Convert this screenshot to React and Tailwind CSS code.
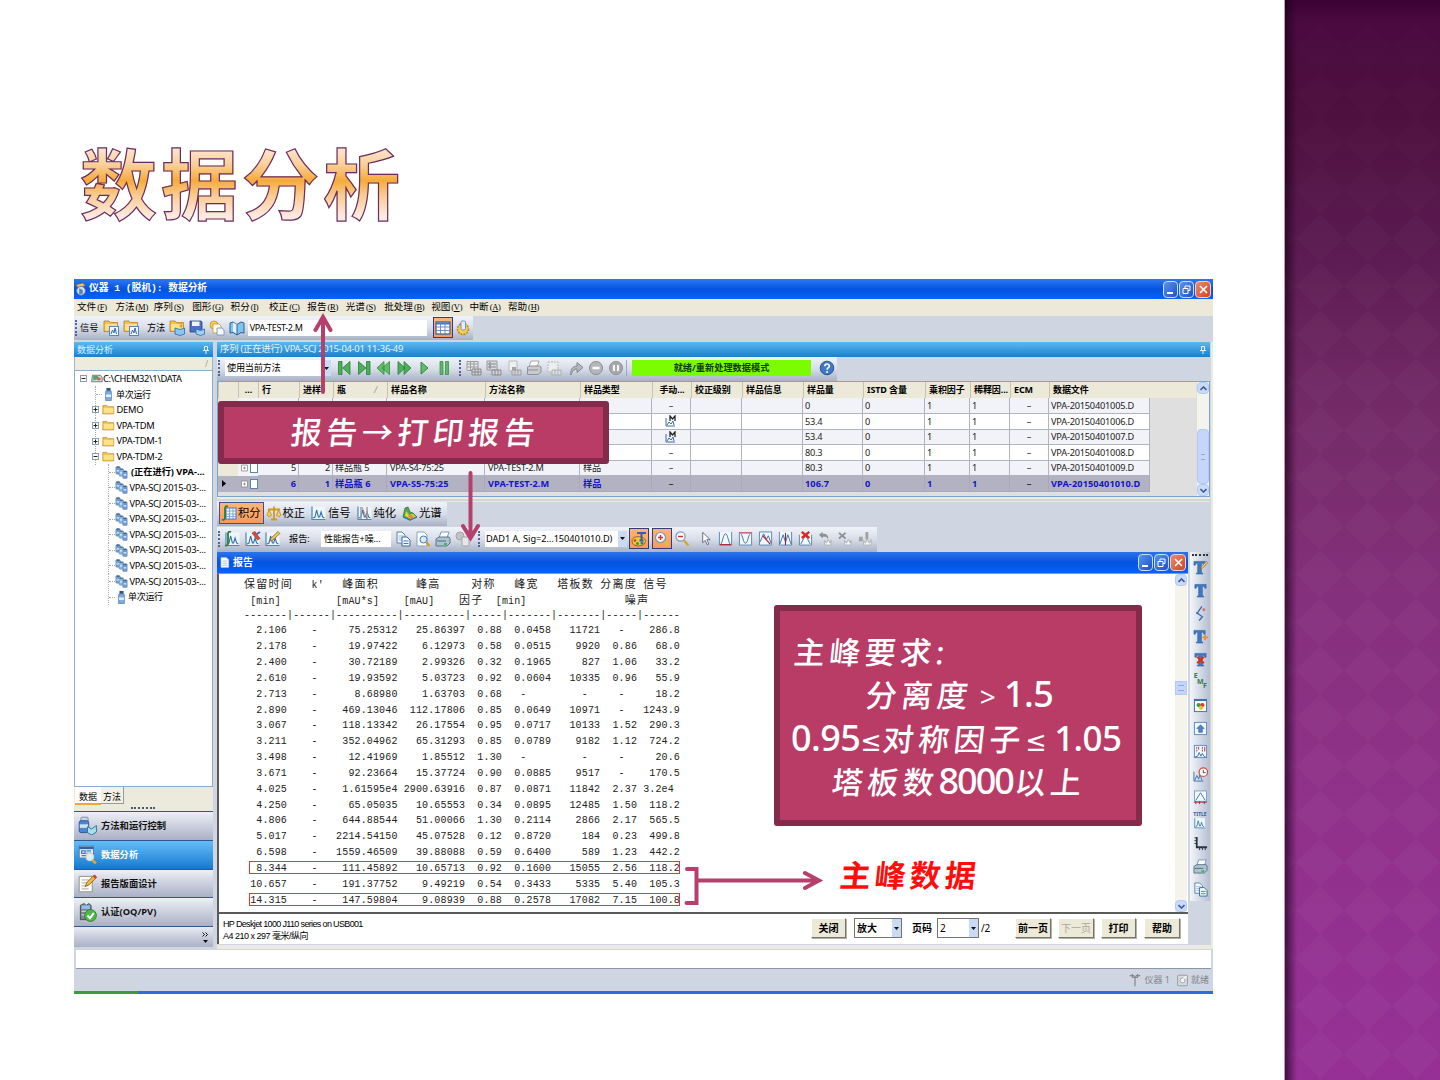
import React from 'react';

/* ---------- icons ---------- */

const Svg = ({ s = 16, children, className = '' }) => (
  <svg width={s} height={s} viewBox="0 0 16 16" fill="none" className={'shrink-0 ' + className}>
    {children}
  </svg>
);

const Chart = ({ x = 1, c = '#4e86b4', line = '#35719f' }) => (
  <>
    <rect x={x} y="1.5" width="13.5" height="13" fill="#eef6fc" />
    <path d={`M${x} 1.5v13h13.5`} stroke={c} strokeWidth="1.2" />
    <path d={`M${x + 1} 13l2-1 1.600-7 1.800 7 1.200 0 1.500-5 1.500 5 1.800 1`} stroke={line} strokeWidth="1.1" />
  </>
);

const Folder = ({ y = 0 }) => (
  <>
    <path d={`M1 ${3 + y}h5l1.500 1.500h7v9h-13.500z`} fill="#f2c14b" stroke="#a87a1c" strokeWidth=".7" />
    <path d={`M2 ${6 + y}h12v6.500h-12z`} fill="#fbe08a" />
  </>
);

const shapes = {
  app: (
    <>
      <path d="M2 3l8-2 3 3-8 3z" fill="#e8c070" stroke="#6b5a30" strokeWidth=".7" />
      <circle cx="8" cy="10" r="5" fill="#cfe0f2" stroke="#5a7ba6" />
      <path d="M6 7l4 2v4l-4 1z" fill="#5b7fae" />
    </>
  ),
  folderChart: (
    <>
      <Folder y={-2} />
      <rect x="6.500" y="6.500" width="9" height="9" fill="#f3f8ff" stroke="#5a86c0" />
      <path d="M8 14l1.500-4 1.500 3 1-5 1.500 6" stroke="#3369b0" />
    </>
  ),
  folderBook: (
    <>
      <Folder y={-2} />
      <path d="M8 4c3-4 6-1 5 2l2-1-3 3-2-3 1.500.5c.5-2-1.500-2.500-3.500-1.500z" fill="#e59b2c" />
      <path d="M6 8l5 1.500 4.500-1.500v6l-4.500 1.500-5-1.500z" fill="#8cc7ee" stroke="#2a6aa6" strokeWidth=".8" />
    </>
  ),
  save: (
    <>
      <path d="M1 1h11l1 1v10h-12z" fill="#4f6fc0" stroke="#283f86" strokeWidth=".8" />
      <rect x="3" y="1.500" width="7.500" height="4.500" fill="#eef2fa" />
      <path d="M7 9l4.500 1.500 4-1.500v5l-4 1.500-4.500-1.500z" fill="#9fd2f0" stroke="#2a6aa6" strokeWidth=".8" />
    </>
  ),
  pages: (
    <>
      <circle cx="5" cy="5" r="4" fill="#f6d154" stroke="#b98618" strokeWidth=".7" />
      <path d="M4 4h6l2 2v7h-8z" fill="#fffbe5" stroke="#b99a48" strokeWidth=".8" />
      <path d="M8 8h5l2 2v5h-7z" fill="#f6f9ff" stroke="#6f8db9" strokeWidth=".8" />
    </>
  ),
  book: (
    <>
      <path d="M1 3l3-1 4 2.500 4-2.500 3 1v10l-3-.5-4 2.500-4-2.500-3 .5z" fill="#85c3ea" stroke="#27619a" />
      <path d="M4 2.500v9l4 2.500v-9.500z" fill="#e3f4fd" />
      <path d="M8 4.500v10" stroke="#27619a" />
    </>
  ),
  grid: (
    <>
      <rect x="1" y="2" width="14" height="12" fill="#fff" stroke="#2c5da6" strokeWidth="1.200" />
      <path d="M1 3.500h14" stroke="#3d78c8" strokeWidth="2" />
      <path d="M1 7h14M1 10.500h14M5.500 3v11M10 3v11" stroke="#5d86bd" strokeWidth=".9" />
    </>
  ),
  sheetGear: (
    <>
      <circle cx="8" cy="9" r="5.500" fill="#f4cf55" stroke="#b58a1c" strokeDasharray="2 1" strokeWidth="1.500" />
      <rect x="6" y="1" width="4.500" height="9" rx="1.500" fill="#e8eef8" stroke="#7a8eb3" />
    </>
  ),
  drive: (
    <>
      <path d="M3 4h10l2 3v5h-13z" fill="#d4dce4" stroke="#56636e" />
      <path d="M4 5h6v4l-6 1z" fill="#4aa768" />
      <path d="M9 6l4 1v3h-4z" fill="#d95f50" />
    </>
  ),
  vial: (
    <>
      <rect x="5.500" y="0" width="5" height="3.500" fill="#35506e" />
      <path d="M5 3.500h6l.5 1v11h-7v-11z" fill="#79aee6" stroke="#44699b" strokeWidth=".8" />
      <rect x="5" y="8" width="6" height="3" fill="#e8f1fb" />
    </>
  ),
  folder: <Folder />,
  vials: (
    <>
      <rect x="1" y="1" width="5.500" height="9" rx="1" fill="#6f9fd3" stroke="#5c82ad" strokeWidth=".6" />
      <rect x="5" y="3.500" width="5.500" height="9" rx="1" fill="#8bb7e2" stroke="#5c82ad" strokeWidth=".6" />
      <rect x="9.500" y="6" width="5.500" height="9.500" rx="1" fill="#6e9bd0" stroke="#5c82ad" strokeWidth=".6" />
      <path d="M2 1.500h3.500M6 4h3.500M10.500 6.500h3.500" stroke="#3d5f86" strokeWidth="1.500" />
      <path d="M2 6h3M6 8.500h3M10.500 11h3.500" stroke="#e8f2fb" strokeWidth="1.500" />
    </>
  ),
  first: <path d="M2.500 1.500h3.500v13h-3.500zM14 1.500v13l-7.500-6.500z" fill="#4fae58" stroke="#24803a" strokeWidth=".8" />,
  last: <path d="M10.500 1.500h3.500v13h-3.500zM2.500 1.500v13l7.500-6.500z" fill="#4fae58" stroke="#24803a" strokeWidth=".8" />,
  prev: <path d="M13.500 1.500v13l-7.500-6.500zM8 1.500v13l-7-6.500z" fill="#63bd66" stroke="#2d8a42" strokeWidth=".8" />,
  next: <path d="M2 1.500v13l7-6.500zM8 1.500v13l7-6.500z" fill="#4fae58" stroke="#24803a" strokeWidth=".8" />,
  play: <path d="M5 2v12l7-6z" fill="#63bd66" stroke="#24803a" strokeWidth=".9" />,
  pause: <path d="M4 1.500h3v13h-3zM9.500 1.500h3v13h-3z" fill="#5fb864" stroke="#2d8a42" strokeWidth=".7" />,
  gGrid: (
    <>
      <path d="M1 1.500h11v9h-11zM1 4h11M1 7h11M4.500 1.500v9M8 1.500v9" stroke="#9b9ca0" fill="#e9e9ea" />
      <path d="M6 9h9v6h-9zM6 12h9M9 9v6M12 9v6" stroke="#85878c" fill="#d4d5d8" />
    </>
  ),
  gList: (
    <>
      <path d="M1 1h10v9h-10z" fill="#d9dadd" stroke="#94969b" />
      <path d="M3 3h2v2h-2zM3 6h2v2h-2zM6 4h4M6 7h4" stroke="#85878c" />
      <path d="M6 10h9v5h-9zM9 10v5M12 10v5" stroke="#85878c" fill="#d4d5d8" />
    </>
  ),
  gPage: (
    <>
      <path d="M3 1h8v10h-8z" fill="#f0f0f1" stroke="#b9babd" />
      <path d="M6 7h4v4h-4z" fill="#a1a3a8" />
      <path d="M6 10h9v5h-9zM9 10v5M12 10v5" stroke="#9b9ca0" fill="#d4d5d8" />
    </>
  ),
  gPrint: (
    <>
      <path d="M5 1h8l-2 6h-8z" fill="#fafafa" stroke="#a6a8ac" />
      <path d="M1.500 7l2-1h10l1.500 1v5l-3 2.500h-10.500z" fill="#c9cacd" stroke="#8f9196" />
      <path d="M2 10h10" stroke="#8f9196" />
    </>
  ),
  gDots: (
    <>
      <path d="M2 2h10v10h-10z" stroke="#b3b5b9" strokeDasharray="2 1" fill="#eceded" />
      <path d="M6 10h9v5h-9zM9 10v5M12 10v5" stroke="#a9abb0" fill="#e2e3e5" />
    </>
  ),
  redo: <path d="M3 15c-1-6 2-9 6-9v-3.500l6 5-6 5v-3.500c-3 0-5 2-6 6z" fill="#b4b6ba" stroke="#7d8085" strokeWidth=".9" />,
  stop: (
    <>
      <circle cx="8" cy="8" r="6.500" fill="#b4b6ba" stroke="#8b8d92" />
      <path d="M4.500 8h7" stroke="#fff" strokeWidth="2.500" />
    </>
  ),
  hold: (
    <>
      <circle cx="8" cy="8" r="6.500" fill="#a7a9ad" stroke="#8b8d92" />
      <path d="M6 5v6M10 5v6" stroke="#fff" strokeWidth="1.800" />
    </>
  ),
  help: (
    <>
      <circle cx="8" cy="8" r="6.800" fill="#3f78c4" stroke="#2b548f" />
      <path d="M5.800 6.300c0-3 4.600-3 4.600-.2 0 1.600-2.300 1.700-2.300 3.600" stroke="#fff" strokeWidth="1.600" />
      <circle cx="8.100" cy="12" r="1" fill="#fff" />
    </>
  ),
  integral: (
    <>
      <rect x="5" y="3" width="10" height="11" fill="#f4f9ff" stroke="#4b76ae" />
      <path d="M5 6h10M5 9h10M5 11.500h10M8.500 3v11M12 3v11" stroke="#6f98c9" strokeWidth=".8" />
      <path d="M7 1.500c-2-1-3 0-3 2v9c0 2-1 3-3 2" stroke="#2f7d35" strokeWidth="1.800" />
    </>
  ),
  scale: (
    <>
      <path d="M8 1.500v12M2 4.500h12M5 14.500h6" stroke="#d19a1f" strokeWidth="1.800" />
      <path d="M1 10l2-5 2.500 5c-1 2-3.500 2-4.500 0zM10.500 10l2-5 2.500 5c-1 2-3.500 2-4.500 0z" fill="#f5cf5f" stroke="#bd8516" strokeWidth=".8" />
    </>
  ),
  signal: <Chart />,
  purity: (
    <>
      <Chart />
      <path d="M4 2v12M10 2v12" stroke="#9a9fa8" strokeWidth="1.500" />
      <path d="M5 2l5 12" stroke="#cd5a60" strokeWidth=".7" />
    </>
  ),
  spectrum: (
    <>
      <path d="M1 12l2-9 3-1 2 5 3 1 4 4-7 3z" fill="#4daa4b" stroke="#266e36" strokeWidth=".7" />
      <path d="M3 11l1-5 3 4 4-1 3 3-5 2z" fill="#e9d33d" />
      <path d="M6 11l2-2 4 3-3 2z" fill="#df8a33" />
      <path d="M1 12l7 3 7-3" stroke="#3d73b5" strokeWidth="1.200" />
    </>
  ),
  intChart: (
    <>
      <Chart />
      <path d="M6 1c-2-.8-3 0-3 2v9c0 2-1 3-3 2.500" stroke="#2f7d35" strokeWidth="1.800" />
    </>
  ),
  chartTool: (
    <>
      <Chart />
      <path d="M7 2l3-1.500 5 7-2.500 1.500z" fill="#d84b3e" stroke="#8d2c25" strokeWidth=".6" />
      <path d="M12 3l3-2" stroke="#3d6b9d" strokeWidth="1.800" />
    </>
  ),
  chartPen: (
    <>
      <Chart />
      <path d="M5 10l1-3 7-6.500 2 2-7 6.500z" fill="#eac25b" stroke="#7d642a" strokeWidth=".7" />
    </>
  ),
  copy: (
    <>
      <path d="M2 1h5l3 3v8h-8z" fill="#f8fbff" stroke="#5b7fac" />
      <path d="M3.500 5h5M3.500 7h5M3.500 9h5" stroke="#86a5cb" strokeWidth=".8" />
      <path d="M7 6h5l3 3v6h-8z" fill="#f8fbff" stroke="#3a6aa3" />
      <path d="M8.500 10h5M8.500 12.500h5" stroke="#3f78c4" strokeWidth="1" />
    </>
  ),
  preview: (
    <>
      <path d="M2 1h7l3 3v11h-10z" fill="#fff" stroke="#8ca3bf" />
      <circle cx="8.500" cy="8.500" r="3.500" fill="#d5ecfa" stroke="#4b7ba8" />
      <path d="M11 11l3.500 4" stroke="#cf9c2d" strokeWidth="2.200" />
    </>
  ),
  print: (
    <>
      <path d="M6 1h8l-2 6h-8z" fill="#fff" stroke="#6f8fa9" strokeWidth=".9" />
      <path d="M1 8l3-2h10l1 1.500v4.500l-3 3h-11z" fill="#aec3cf" stroke="#4f6d7e" strokeWidth=".9" />
      <path d="M2 10h9" stroke="#4f6d7e" />
      <path d="M9 12h3v2h-3z" fill="#37c04a" />
    </>
  ),
  gCopy: (
    <>
      <circle cx="5" cy="5" r="4" fill="#c2c3c6" stroke="#a3a5a8" />
      <path d="M7 6h7v9h-7z" fill="#e6e6e8" stroke="#a3a5a8" />
    </>
  ),
  palette: (
    <>
      <path d="M1 10c0-4 5-5 9-4s6 4 3 7-12 3-12-3z" fill="#f0c63e" stroke="#94681a" />
      <circle cx="4" cy="9.500" r="1.300" fill="#c33" />
      <circle cx="6.500" cy="12.500" r="1.500" fill="#2f9a43" />
      <circle cx="11" cy="12" r="1.500" fill="#2f6fc4" />
      <path d="M6 2h9M10.500 2v8M8.500 9.500h4" stroke="#2f62ae" strokeWidth="2" />
    </>
  ),
  zoomIn: (
    <>
      <circle cx="6.500" cy="6.500" r="5" fill="#f6fbff" stroke="#8097b0" strokeWidth="1.200" />
      <path d="M4 6.500h5M6.500 4v5" stroke="#c5352c" strokeWidth="1.400" />
      <path d="M10.500 10.500l4 4.500" stroke="#e5bc3e" strokeWidth="2.600" />
    </>
  ),
  zoomOut: (
    <>
      <circle cx="6.500" cy="5.500" r="4.600" fill="#f6fbff" stroke="#8097b0" strokeWidth="1.200" />
      <path d="M4 5.500h5" stroke="#c5352c" strokeWidth="1.400" />
      <path d="M10 9.500l4.500 5" stroke="#d5a82e" strokeWidth="2.400" />
    </>
  ),
  cursor: <path d="M5 1.500v11l2.700-2.500 2 4.500 1.800-.8-2-4.500h3.500z" fill="#fff" stroke="#4f5c73" strokeWidth=".9" />,
  peakUp: (
    <>
      <path d="M1.500 1v14h13v-14" fill="#f3f8fd" stroke="#5585bb" />
      <path d="M3 14c2-2 2.500-11 5-11s3 9 5 11" stroke="#3a6da5" />
      <path d="M2 14.500h12" stroke="#b22a34" strokeWidth="1.200" />
    </>
  ),
  peakDown: (
    <>
      <path d="M1.500 1v14h13v-14" fill="#f3f8fd" stroke="#5585bb" />
      <path d="M3 3c2 1 2.500 10 5 10s3-9 5-10" stroke="#3a6da5" />
      <path d="M2 2h12" stroke="#b22a34" strokeWidth="1.200" />
    </>
  ),
  peakTan: (
    <>
      <path d="M1.500 1v14h13v-14z" fill="#f3f8fd" stroke="#5585bb" />
      <path d="M2 12l4-9 3 6 2-4 3 8" stroke="#3a6da5" />
      <path d="M5 5l8 9" stroke="#b22a34" strokeWidth="1.400" />
    </>
  ),
  peakSplit: (
    <>
      <path d="M1.500 1v14h13v-14" fill="#f3f8fd" stroke="#5585bb" />
      <path d="M2 14l3.500-10 2.500 8 2.500-8 3.500 10" stroke="#3a6da5" />
      <path d="M8 2v13" stroke="#812c3c" strokeWidth="1.200" />
    </>
  ),
  peakDel: (
    <>
      <path d="M1.500 4v11h13v-11" fill="#f3f8fd" stroke="#5585bb" />
      <path d="M3 14l3-6 2-2 2 2 3 6" stroke="#3a6da5" />
      <path d="M4 1l8 6.500M12 1l-8 6.500" stroke="#d8291c" strokeWidth="2.500" />
    </>
  ),
  gUndo: (
    <>
      <path d="M1 4l4-3v2c5 0 6 2 6 6-1-3-3-3-6-3v2z" fill="#8d9094" />
      <path d="M7 15v-5l2 3 2-4 2 4 1-3v5z" fill="#f6f6f6" stroke="#b0b2b6" />
    </>
  ),
  gDel: (
    <>
      <path d="M1 2l7 6M8 2l-7 6" stroke="#8d9094" strokeWidth="2" />
      <path d="M7 15v-5l2 3 2-4 2 4 1-3v5z" fill="#f6f6f6" stroke="#b0b2b6" />
    </>
  ),
  gInfo: (
    <>
      <path d="M1 6h4v5h-4zM8 1h3v8h-3z" fill="#a0a2a6" />
      <path d="M6 15v-5l2 3 2-4 2 4 2-4v6z" fill="#f6f6f6" stroke="#b0b2b6" />
    </>
  ),
  doc: (
    <>
      <path d="M3 1h8l3 3v11h-11z" fill="#fff" stroke="#c4d8f5" />
      <path d="M5 6h7M5 9h7M5 12h7" stroke="#8fa8cc" />
    </>
  ),
  text: <path d="M2 1.500h12v4h-1.500c-.3-1.700-.8-2-2.500-2v9.500c0 .8.500 1 1.500 1v1h-7v-1c1 0 1.500-.2 1.500-1v-9.500c-1.700 0-2.200.3-2.500 2h-1.500z" fill="#3f79c4" stroke="#234d8c" strokeWidth=".5" />,
  textPen: (
    <>
      <path d="M1 1.500h12v4h-1.500c-.3-1.700-.8-2-2.500-2v9.500c0 .8.500 1 1.500 1v1h-7v-1c1 0 1.500-.2 1.500-1v-9.500c-1.700 0-2.200.3-2.500 2h-1.500z" fill="#3f79c4" stroke="#234d8c" strokeWidth=".5" />
      <path d="M8 10l1-3 5-5.500 1.500 1.500-5 5.500z" fill="#f0d070" stroke="#7d642a" strokeWidth=".7" />
    </>
  ),
  textPlus: (
    <>
      <path d="M1 1.500h12v4h-1.500c-.3-1.700-.8-2-2.500-2v9.500c0 .8.500 1 1.500 1v1h-7v-1c1 0 1.500-.2 1.500-1v-9.500c-1.700 0-2.200.3-2.500 2h-1.500z" fill="#3f79c4" stroke="#234d8c" strokeWidth=".5" />
      <path d="M13 6v6M10 9h6" stroke="#ea8b3a" strokeWidth="1.800" />
    </>
  ),
  textDel: (
    <>
      <path d="M2 1.500h12v4h-1.500c-.3-1.700-.8-2-2.500-2v9.500c0 .8.500 1 1.500 1v1h-7v-1c1 0 1.500-.2 1.500-1v-9.500c-1.700 0-2.200.3-2.500 2h-1.500z" fill="#3f79c4" stroke="#234d8c" strokeWidth=".5" />
      <path d="M4.500 5l7 7M11.500 5l-7 7" stroke="#d8321c" strokeWidth="2.400" />
    </>
  ),
  poly: (
    <>
      <path d="M9.500 .5l-5 7 5.500 4-3.500 4" stroke="#3e6ea8" strokeWidth="1.400" />
      <circle cx="11.500" cy="4" r="1.500" fill="#d9705c" />
      <circle cx="4.500" cy="7.500" r="1.200" fill="#3e6ea8" />
    </>
  ),
  picture: (
    <>
      <rect x="1.500" y="1.500" width="13" height="13" fill="#fff" stroke="#3b6ea9" />
      <path d="M1.500 2.500h13" stroke="#3b6ea9" strokeWidth="1.500" />
      <circle cx="6" cy="7.500" r="2.300" fill="#2da044" />
      <circle cx="10" cy="7.500" r="2.300" fill="#dc3a2c" />
      <circle cx="8.500" cy="10.500" r="2.300" fill="#f0c030" />
    </>
  ),
  boxUp: (
    <>
      <rect x="1.500" y="1.500" width="13" height="13" fill="#f2f8ff" stroke="#5d8bc2" />
      <path d="M8 4l4 4h-2v4h-4v-4h-2z" fill="#4d84ca" stroke="#2c5b9c" strokeWidth=".6" />
    </>
  ),
  marks: (
    <>
      <rect x="1.500" y="1.500" width="13" height="13" fill="#f4f9ff" stroke="#5d8bc2" />
      <path d="M4 3v6M10 3v6" stroke="#a63440" strokeDasharray="2 1" />
      <path d="M6 3v3M12.500 3v5" stroke="#a63440" />
      <path d="M2 14l3-1 1.500-4 2 4 1.500-3 1.500 3 2 1" stroke="#3a6da5" />
    </>
  ),
  clock: (
    <>
      <path d="M1 5v10h10M2 14l2-5 2 4 1.500-5 2 6" stroke="#3a6da5" />
      <circle cx="11" cy="5.500" r="4.500" fill="#fff" stroke="#cf4a3a" strokeWidth="1.300" />
      <path d="M11 3v3h2.500" stroke="#444" />
    </>
  ),
  base: (
    <>
      <rect x="1.500" y="1" width="13" height="11" fill="#f4f9ff" stroke="#5d8bc2" strokeWidth=".8" />
      <path d="M3 11l5-8 5 8" stroke="#3a6da5" />
      <path d="M1 13h14M3 12v3M7 12v3M12 12v3" stroke="#a62c36" />
    </>
  ),
  axes: (
    <>
      <path d="M4 1v11h11" stroke="#2d3540" strokeWidth="1.900" />
      <path d="M1.500 2h2M1.500 5h2M1.500 8h2M7 12v3M10 12v3M13 12v3" stroke="#2d3540" />
    </>
  ),
  instr: <path d="M2 3h5M9 3h5M5 1v4M11 1v4M8 3v12M5 5h6" stroke="#83878e" strokeWidth="1.400" />,
  ready: (
    <>
      <rect x="2" y="1.500" width="12" height="13" rx="1" fill="#d8dade" stroke="#8b8f96" />
      <circle cx="8" cy="8" r="3" fill="#f4f4f4" stroke="#999" />
      <path d="M9 6l4-3" stroke="#fff" strokeWidth="1.500" />
    </>
  ),
  navMethod: (
    <>
      <rect x="2.500" y="1" width="6" height="4" rx="1" fill="#c7d6e8" stroke="#6780a0" strokeWidth=".7" />
      <rect x="1" y="4" width="8" height="10" rx="1.500" fill="#4d84d0" stroke="#2f568f" strokeWidth=".8" />
      <path d="M1.500 7h7v3h-7z" fill="#cfe3f8" />
      <path d="M8 9l3.500 2 4-3v5.500l-4 2.500-3.500-2z" fill="#a9e0ec" stroke="#2f7796" strokeWidth=".8" />
    </>
  ),
  navData: (
    <>
      <rect x="1" y="1" width="12" height="10" fill="#e4eef9" stroke="#5677a3" strokeWidth=".8" />
      <path d="M1 2.500h12" stroke="#33629e" strokeWidth="2" />
      <path d="M3 5h3v2h-3zM7 5h4M7 7h4M3 9h6" stroke="#4e7cb2" />
      <circle cx="10" cy="10" r="3.200" fill="#d9f0fb" stroke="#c7d3df" />
      <path d="M12 12.500l3 3" stroke="#dfa53a" strokeWidth="2.200" />
    </>
  ),
  navReport: (
    <>
      <path d="M1 2h11v13h-11z" fill="#fdfdf8" stroke="#8d8f86" strokeWidth=".8" />
      <path d="M3 5h6M3 7.500h5M3 10h5M3 12.500h6" stroke="#a7a99f" strokeWidth=".8" />
      <path d="M6 10.500l1.500-3.500 6-6 2 2-6 6z" fill="#f0b840" stroke="#8a5a20" strokeWidth=".7" />
      <path d="M12.500 2l1.500-1.500 2 2-1.500 1.500z" fill="#c84338" />
    </>
  ),
  navCert: (
    <>
      <path d="M2 2l3-1.500 2 1.500 2-1.500 2 1.500v12h-9z" fill="#7d8790" stroke="#434b53" strokeWidth=".8" />
      <path d="M3 2h7v3h-7z" fill="#8fc2ea" />
      <path d="M3 7h7M3 10h7" stroke="#cfd5da" />
      <circle cx="10.500" cy="10.500" r="5" fill="#4fb848" stroke="#2d7d2d" strokeWidth=".7" />
      <path d="M8 10.500l2 2.200 3.300-4.200" stroke="#fff" strokeWidth="1.700" />
    </>
  ),
};

const Icon = ({ n, s = 15 }) => <Svg s={s}>{shapes[n]}</Svg>;
const Slot = ({ n, hot, s = 16 }) => (
  <span
    className={
      'flex h-[21px] w-5 shrink-0 items-center justify-center ' +
      (hot ? 'border border-[#3b3a78] bg-gradient-to-b from-[#fcb578] to-[#f79a5c]' : '')
    }
  >
    <Icon n={n} s={s} />
  </span>
);
const Grip = () => <span className="mx-px h-4 w-0.5 shrink-0 border-l-2 border-dotted border-[#4c6798]" />;
const Sep = () => <span className="h-4 w-px shrink-0 bg-[#9aa9c4]" />;

const BAR = 'bg-gradient-to-b from-[#f0f3f9] via-[#d8dde8] to-[#a9b1c6]';

const WinButtons = () => (
  <div className="flex items-center gap-px">
    <span className="flex h-[17px] w-[15px] items-end rounded-sm border border-[#c9dcfa] bg-gradient-to-br from-[#5c92f0] to-[#1c50c8] p-[3px]">
      <i className="block h-0.5 w-1.5 bg-white" />
    </span>
    <span className="flex h-[17px] w-[15px] items-center justify-center rounded-sm border border-[#c9dcfa] bg-gradient-to-br from-[#5c92f0] to-[#1c50c8]">
      <svg width="9" height="9" viewBox="0 0 9 9" fill="none" stroke="#fff">
        <path d="M3 3v-2h5v4.500h-2M1 3.500h5v5h-5z" />
      </svg>
    </span>
    <span className="flex h-[17px] w-4 items-center justify-center rounded-sm border border-[#f3d2c8] bg-gradient-to-br from-[#ec8a6a] to-[#d23f1c]">
      <svg width="9" height="9" viewBox="0 0 9 9" stroke="#fff" strokeWidth="1.600">
        <path d="M1 1l7 7M8 1l-7 7" />
      </svg>
    </span>
  </div>
);

const Pin = () => (
  <svg width="6" height="8" viewBox="0 0 6 8" fill="none" stroke="#e9f5fd">
    <path d="M1.500 .5h3v4M1.500 .5v4M0 4.500h6M3 4.500v3.500" />
  </svg>
);

const Chevron = ({ up }) => (
  <span className="flex h-3 w-3 shrink-0 items-center justify-center rounded-sm border border-[#b4c8f2] bg-[#cbdafa]">
    <svg width="7" height="5" viewBox="0 0 7 5" fill="none" stroke="#3e5b92" strokeWidth="1.600">
      <path d={up ? 'M.5 4l3-3 3 3' : 'M.5 1l3 3 3-3'} />
    </svg>
  </span>
);

const Drop = () => (
  <span className="flex h-full w-[9px] shrink-0 items-center justify-center bg-[#c9dbf4]">
    <svg width="5" height="3" viewBox="0 0 5 3"><path d="M0 0h5l-2.500 3z" fill="#111" /></svg>
  </span>
);

/* ---------- top of the window ---------- */

const menus = [
  ['文件', 'F'], ['方法', 'M'], ['序列', 'S'], ['图形', 'G'], ['积分', 'I'], ['校正', 'C'],
  ['报告', 'R'], ['光谱', 'S'], ['批处理', 'B'], ['视图', 'V'], ['中断', 'A'], ['帮助', 'H'],
];

const TopBars = () => (
  <>
    <div className="flex h-5 items-center justify-between bg-gradient-to-b from-[#2a7af4] via-[#0552e0] to-[#0563f8] pr-0.5">
      <div className="flex items-center gap-px">
        <Icon n="app" s={14} />
        <span className="whitespace-pre font-['Liberation_Mono','Noto_Sans_CJK_SC',monospace] text-[9.800px] font-bold leading-[18px] tracking-[-0.1px] text-white">仪器 1 (脱机): 数据分析</span>
      </div>
      <WinButtons />
    </div>
    <div className="flex h-[17px] items-center bg-[#ece9d8] pl-[3px] text-[9.6px] text-black">
      {menus.map(([t, k], i) => (
        <span key={i} className={'shrink-0 whitespace-nowrap ' + (t.length > 2 ? 'w-[47px]' : 'w-[38.4px]')}>
          {t}
          <span className="ml-px font-['Liberation_Serif',serif] text-[8.500px] tracking-[-0.3px]">(<u>{k}</u>)</span>
        </span>
      ))}
    </div>
    <div className="h-[26px] bg-[#d0d6e1]">
      <div className={'flex h-6 w-[399px] items-center pb-px text-[9.2px] ' + BAR}>
        <Grip />
        <span className="ml-0.5 w-[21px] whitespace-nowrap">信号</span>
        <Slot n="folderChart" />
        <Slot n="folderChart" />
        <span className="ml-1.5 w-5 whitespace-nowrap">方法</span>
        <Slot n="folderBook" />
        <Slot n="save" />
        <Slot n="pages" />
        <Slot n="book" />
        <span className="ml-px flex h-4 w-[180px] items-center bg-white pl-0.5 text-[9px] tracking-[-0.35px]">VPA-TEST-2.M</span>
        <span className="ml-1"><Sep /></span>
        <span className="ml-0.5 flex"><Slot n="grid" hot /><Slot n="sheetGear" /></span>
      </div>
    </div>
  </>
);

/* ---------- left column ---------- */

const tree = [
  [0, '-', 'drive', 'C:\\CHEM32\\1\\DATA'],
  [1, '', 'vial', '单次运行'],
  [1, '+', 'folder', 'DEMO'],
  [1, '+', 'folder', 'VPA-TDM'],
  [1, '+', 'folder', 'VPA-TDM-1'],
  [1, '-', 'folder', 'VPA-TDM-2'],
  [2, '', 'vials', '(正在进行) VPA-...', true],
  ...Array.from({ length: 7 }, () => [2, '', 'vials', 'VPA-SCJ 2015-03-...']),
  [2, '', 'vial', '单次运行'],
];

const indent = ['pl-[5px]', 'pl-[17px]', 'pl-[30px]'];

const nav = [
  ['navMethod', '方法和运行控制'],
  ['navData', '数据分析'],
  ['navReport', '报告版面设计'],
  ['navCert', '认证(OQ/PV)'],
];

const Sidebar = () => (
  <div className="flex w-[139px] flex-col">
    <div className="flex h-[15px] items-center justify-between bg-gradient-to-b from-[#5ab9f0] to-[#1680cc] pl-[3px] pr-1 text-[9px] text-[#dff1fc]">
      数据分析<Pin />
    </div>
    <div className="h-[13px] border-x border-[#9eb6d2] bg-[#edebdb] pr-1 text-right text-[8px] leading-[13px] text-[#999]">/</div>
    <div className="h-[417px] border border-[#8faccb] bg-white">
      {tree.map(([lv, ex, ic, label, bold], i) => (
        <div key={i} className={'flex h-[15.6px] items-center ' + indent[lv]}>
          <span className="relative flex h-full w-[10px] shrink-0 items-center">
            {lv > 0 && <i className="absolute -top-px bottom-0 left-[3px] border-l border-dotted border-[#a9a9a9]" />}
            {ex ? (
              <span className="relative flex h-[7px] w-[7px] items-center justify-center border border-[#8d9cae] bg-white">
                <svg width="5" height="5" viewBox="0 0 5 5" stroke="#222"><path d={ex === '+' ? 'M.5 2.5h4M2.5 .5v4' : 'M.5 2.5h4'} /></svg>
              </span>
            ) : (
              <i className="ml-1 w-1.5 border-t border-dotted border-[#a9a9a9]" />
            )}
          </span>
          <Icon n={ic} s={13} />
          <span
            className={
              'whitespace-nowrap ' +
              (bold
                ? 'pl-[3px] text-[9.2px] font-bold'
                : ic === 'drive'
                  ? 'text-[9.3px] tracking-[-0.3px]'
                  : ic === 'vial'
                    ? (lv === 1 ? 'pl-px ' : '') + 'text-[9px] tracking-[-0.3px]'
                    : 'pl-[1.5px] text-[9.3px] tracking-[-0.25px]')
            }
          >
            {label}
          </span>
        </div>
      ))}
    </div>
    <div className="flex h-6 items-start bg-[#eceadc] text-[9px]">
      <span className="ml-px flex h-[18px] w-[26px] items-center justify-center border-b-2 border-[#f0a63c] bg-[#fdfdfb] pt-1">数据</span>
      <span className="flex h-[17px] w-[23px] items-center justify-center border-b border-r border-[#9a9a90] bg-[#f2f1e8] pt-1">方法</span>
      <span className="mt-5 ml-[7px] w-6 border-t-2 border-dotted border-[#4d5566]" />
    </div>
    {nav.map(([ic, t], i) => (
      <div
        key={t}
        className={
          'flex h-[28.8px] items-center gap-1 border-t border-[#33568e] pl-1 text-[9.3px] font-bold ' +
          (i === 1 ? 'bg-gradient-to-b from-[#63bdf6] to-[#0e7ad2] text-white' : 'bg-gradient-to-b from-[#eef0f6] to-[#aab1c6] text-[#111]')
        }
      >
        <Icon n={ic} s={19} />
        {t}
      </div>
    ))}
    <div className="flex h-[21px] items-center justify-end border-t border-[#33568e] bg-gradient-to-b from-[#e8ebf2] to-[#aab1c6] pr-1">
      <svg width="7" height="11" viewBox="0 0 7 11" fill="none" stroke="#111"><path d="M.5 .5l2 2-2 2M3.500 .5l2 2-2 2" /><path d="M1 8h5l-2.500 3z" fill="#111" stroke="none" /></svg>
    </div>
  </div>
);

/* ---------- sequence table ---------- */

const COLS =
  'grid grid-cols-[20px_20px_41px_34px_54px_98px_95px_72px_39px_51px_61px_60px_62px_45px_40px_39px_101px]';

const heads = ['', '...', '行', '进样', '瓶', '样品名称', '方法名称', '样品类型', '手动...', '校正级别', '样品信息', '样品量', 'ISTD 含量', '乘积因子', '稀释因...', 'ECM', '数据文件'];

const rows = [
  ['', '', '', '', '', '', '', '–', '', '', '0', '005'],
  ['', '', '', '', '', '', '', 'M', '', '', '53.4', '006'],
  ['', '', '', '', '', '', '', 'M', '', '', '53.4', '007'],
  ['', '', '', '', '', '', '', '–', '', '', '80.3', '008'],
  ['', '5', '2', '样品瓶 5', 'VPA-S4-75:25', 'VPA-TEST-2.M', '样品', '–', '', '', '80.3', '009'],
  ['', '6', '1', '样品瓶 6', 'VPA-S5-75:25', 'VPA-TEST-2.M', '样品', '–', '', '', '106.7', '010'],
];

const SeqTable = () => (
  <div className="flex h-[116px] border border-[#7da3cf] bg-[#dfdfdf]">
    <div className="w-[978px]">
      <div className={'h-[16px] bg-[#ece9d8] text-[9px] font-bold leading-4 ' + COLS}>
        {heads.map((h, i) => (
          <span key={i} className={'overflow-hidden whitespace-nowrap border-l border-[#c6c3b2] tracking-[-0.1px] ' + (i === 1 || i === 8 ? 'text-center' : 'pl-[3px]')}>
            {h}
            {i === 4 && <em className="pl-7 font-normal text-[#999]">/</em>}
          </span>
        ))}
      </div>
      {rows.map((r, i) => {
        const sel = i === 5;
        const line = 'whitespace-nowrap border-b border-r ' + (sel ? 'border-[#a9a9bb] ' : 'border-[#b0b4c0] ');
        const cell = 'overflow-hidden ' + line;
        const vals = [r[1], r[2], r[3], r[4], r[5], r[6]];
        return (
          <div
            key={i}
            className={
              'h-[15.6px] w-[932px] text-[9.2px] leading-[15px] ' + COLS +
              (sel ? ' bg-[#b2b2c2] font-bold text-[#1414c8] tracking-[0.1px]' : i % 2 ? ' bg-white text-[#222] tracking-[-0.2px]' : ' bg-[#f2f3f9] text-[#222] tracking-[-0.2px]')
            }
          >
            <span className={'pl-1 ' + (sel ? 'flex items-center' : 'bg-[#ece9d8]')}>
              {sel && <svg width="4" height="7" viewBox="0 0 4 7"><path d="M0 0l4 3.500-4 3.500z" fill="#000" /></svg>}
            </span>
            <span className="flex items-center gap-0.5 pl-[3px]">
              {i > 3 && (
                <>
                  <svg width="8" height="8" viewBox="0 0 7 7" fill="#fff" stroke="#888" strokeWidth=".8"><path d="M.5 .5h6v6h-6zM2 3.500h3M3.500 2v3" /></svg>
                  <i className="block h-[10px] w-[9px] border border-[#5c86ae] bg-white" />
                </>
              )}
            </span>
            {vals.map((v, k) => (
              <span key={k} className={cell + (k < 2 ? 'pr-0.5 text-right' : k < 3 ? 'pl-0.5' : 'pl-[3px]')}>{v}</span>
            ))}
            <span className={cell + 'flex items-center justify-center text-[#333]'}>
              {r[7] === 'M' ? (
                <svg width="12" height="12" viewBox="0 0 12 12" fill="none">
                  <path d="M1 3v8h9" stroke="#3a6da5" />
                  <path d="M2 10l2-3 2 2 2-3 1 4" stroke="#3a6da5" />
                  <path d="M5 6v-5l2.500 3 2.500-3v5" stroke="#222" strokeWidth="1.300" />
                </svg>
              ) : '–'}
            </span>
            <span className={cell} />
            <span className={cell} />
            <span className={cell + 'pl-0.5'}>{r[10]}</span>
            <span className={cell + 'pl-0.5'}>0</span>
            <span className={cell + 'pl-0.5'}>1</span>
            <span className={cell + 'pl-0.5'}>1</span>
            <span className={cell + 'text-center text-[#333]'}>–</span>
            <span className={line + 'pl-0.5'}>VPA-20150401{r[11]}.D</span>
          </div>
        );
      })}
    </div>
    <div className="ml-auto flex w-3 flex-col items-center justify-between bg-[#f5f4ec]">
      <Chevron up />
      <span className="mt-auto flex h-[55px] w-3 items-center justify-center rounded-sm border border-[#b4c8f2] bg-[#c6d5fb]">
        <i className="h-1.5 w-1 border-y border-[#8fa9de]" />
      </span>
      <Chevron />
    </div>
  </div>
);

/* ---------- report ---------- */

const H1 = "保留时间   k'   峰面积      峰高     对称   峰宽   塔板数 分离度 信号";
const H2 = ' [min]         [mAU*s]    [mAU]    因子  [min]                噪声';
const RULE = '-------|------|----------|----------|-----|-------|-------|-----|------';

const peaks = [
  ['2.106', '75.25312', '25.86397', '0.88', '0.0458', '11721', '-  ', '286.8'],
  ['2.178', '19.97422', '6.12973', '0.58', '0.0515', '9920', '0.86', '68.0'],
  ['2.400', '30.72189', '2.99326', '0.32', '0.1965', '827', '1.06', '33.2'],
  ['2.610', '19.93592', '5.03723', '0.92', '0.0604', '10335', '0.96', '55.9'],
  ['2.713', '8.68980', '1.63703', '0.68', '-    ', '-  ', '-  ', '18.2'],
  ['2.890', '469.13046', '112.17806', '0.85', '0.0649', '10971', '-  ', '1243.9'],
  ['3.067', '118.13342', '26.17554', '0.95', '0.0717', '10133', '1.52', '290.3'],
  ['3.211', '352.04962', '65.31293', '0.85', '0.0789', '9182', '1.12', '724.2'],
  ['3.498', '12.41969', '1.85512', '1.30', '-    ', '-  ', '-  ', '20.6'],
  ['3.671', '92.23664', '15.37724', '0.90', '0.0885', '9517', '-  ', '170.5'],
  ['4.025', '1.61595e4', '2900.63916', '0.87', '0.0871', '11842', '2.37', '3.2e4 '],
  ['4.250', '65.05035', '10.65553', '0.34', '0.0895', '12485', '1.50', '118.2'],
  ['4.806', '644.88544', '51.00066', '1.30', '0.2114', '2866', '2.17', '565.5'],
  ['5.017', '2214.54150', '45.07528', '0.12', '0.8720', '184', '0.23', '499.8'],
  ['6.598', '1559.46509', '39.88088', '0.59', '0.6400', '589', '1.23', '442.2'],
  ['8.344', '111.45892', '10.65713', '0.92', '0.1600', '15055', '2.56', '118.2'],
  ['10.657', '191.37752', '9.49219', '0.54', '0.3433', '5335', '5.40', '105.3'],
  ['14.315', '147.59804', '9.08939', '0.88', '0.2578', '17082', '7.15', '100.8'],
];

const format = (p) =>
  p[0].padStart(7) + '    -' + p[1].padStart(13) + p[2].padStart(11) + p[3].padStart(6) +
  p[4].padStart(8) + p[5].padStart(8) + p[6].padStart(6) + p[7].padStart(7);

/* Chinese glyphs take exactly two cells of the fixed-pitch grid. */
const Mixed = ({ text }) =>
  text.split(/([\u4e00-\u9fff]+)/).map((part, i) =>
    i % 2 ? (
      <span key={i} className="font-['Noto_Sans_CJK_SC',sans-serif] text-[11px] tracking-[1.28px]">{part}</span>
    ) : (
      part
    ),
  );

const Btn = ({ children, off, className = '' }) => (
  <span className={'flex h-5 items-center justify-center whitespace-nowrap border border-b-[#77756b] border-l-white border-r-[#77756b] border-t-white bg-[#ece9d8] shadow-[1px_1px_0_#b5b2a4] ' + (off ? 'text-[#a9a698] ' : 'font-bold text-black ') + className}>
    {children}
  </span>
);

const ReportWindow = () => (
  <div className="flex w-[971px] flex-col">
    <div className="flex h-[21px] items-center justify-between bg-gradient-to-b from-[#2a74ec] via-[#0552e0] to-[#0563f8] pl-0.5 pr-0.5">
      <span className="flex items-center gap-[3px] text-[10px] font-bold text-white"><Icon n="doc" s={11} /><span className="-mt-px">报告</span></span>
      <WinButtons />
    </div>
    <div className="flex h-[341px] border-b-2 border-l-2 border-[#5a5a58] border-t border-t-[#9a9a94] bg-white">
      <div className="relative w-[956px] shrink-0 overflow-hidden whitespace-pre pl-[25px] pt-0.5 font-['Liberation_Mono',monospace] text-[10px] tracking-[0.14px] text-[#222]">
        {[H1, H2, RULE].map((t, i) => (
          <div key={i} className="h-[15.83px] leading-[15.83px]"><Mixed text={t} /></div>
        ))}
        {peaks.map((p, i) => (
          <div key={i} className="h-[15.83px] leading-[15.83px]">{format(p)}</div>
        ))}
        <i className="absolute left-[30px] top-[287px] h-[13px] w-[431px] border border-solid border-red-600/80" />
        <i className="absolute left-[30px] top-[319px] h-[13px] w-[431px] border border-solid border-red-600/80" />
      </div>
      <div className="flex w-3 flex-col items-center bg-[#f5f4ec]">
        <Chevron up />
        <span className="mt-[95px] flex h-3.5 w-3 items-center justify-center border border-[#b4c8f2] bg-[#c6d5fb]"><i className="h-1.5 w-1.5 border-y border-[#8fa9de]" /></span>
        <span className="mt-auto"><Chevron /></span>
      </div>
    </div>
    <div className="flex h-[30px] items-center border-l-2 border-[#5a5a58] bg-white pb-0.5 text-[10px]">
      <div className="w-[592px] shrink-0 whitespace-nowrap pl-1 pt-1 font-['Liberation_Sans','Noto_Sans_CJK_SC',sans-serif] text-[9px] leading-3 tracking-[-0.65px]">
        HP Deskjet 1000 J110 series on USB001<br /><span className="tracking-[-0.5px]">A4 210 x 297 毫米/纵向</span>
      </div>
      <Btn className="w-[35px]">关闭</Btn>
      <span className="ml-2 flex h-5 w-12 items-center justify-between border border-[#77756b] bg-white pl-0.5 font-bold">放大<Drop /></span>
      <span className="ml-2.5 font-bold">页码</span>
      <span className="ml-[5px] flex h-5 w-[42px] items-center justify-between border border-[#77756b] bg-white pl-0.5">2<Drop /></span>
      <span className="ml-0.5 w-[34px] tracking-tight">/2</span>
      <Btn className="w-9">前一页</Btn>
      <Btn off className="ml-[7px] w-9">下一页</Btn>
      <Btn className="ml-[7px] w-[35px]">打印</Btn>
      <Btn className="ml-2 w-9">帮助</Btn>
    </div>
  </div>
);

const sideTools = ['textPen', 'text', 'poly', 'textPlus', 'textDel', 'EMF', 'picture', 'boxUp', 'marks', 'clock', 'base', 'TITLE', 'axes', 'print', 'copy'];

const SideTools = () => (
  <div className="ml-0.5 h-[349px] w-5 bg-gradient-to-r from-[#f4f6fa] to-[#b4bed2] pt-0.5">
    <div className="mx-0.5 border-t-2 border-dotted border-[#333]" />
    {sideTools.map((n) => (
      <div key={n} className="flex h-[23px] items-center justify-center">
        {n === 'EMF' ? (
          <span className="flex text-[7px] font-bold leading-none tracking-[-0.6px] text-[#3c7a48]"><i className="-mt-1 not-italic">E</i><i className="mt-0.5 not-italic">M</i><i className="mt-1.5 not-italic">F</i></span>
        ) : n === 'TITLE' ? (
          <span className="flex flex-col items-center text-[5px] font-bold leading-[5px] text-[#33629e]">TITLE<Icon n="signal" s={12} /></span>
        ) : (
          <Icon n={n} s={15} />
        )}
      </div>
    ))}
  </div>
);

const MainArea = () => (
  <div className="flex w-[1000px] flex-col border-r-2 border-[#eceadc] pl-1">
    <div className="flex h-[15px] w-[993px] items-center justify-between bg-gradient-to-b from-[#5ab9f0] to-[#1680cc] pl-[3px] pr-1 text-[9.4px] text-[#e4f3fc]">
      <span className="tracking-[-0.25px]">序列 (正在进行) VPA-SCJ 2015-04-01 11-36-49</span><Pin />
    </div>
    <div className={'flex h-[24px] w-[620px] items-center pb-0.5 text-[9.2px] ' + BAR}>
      <Grip />
      <span className="ml-1 mr-[3px] flex h-4 w-[106px] items-center justify-between bg-white pl-0.5 tracking-[-0.3px]">使用当前方法<Drop /></span>
      {['first', 'last', 'prev', 'next', 'play', 'pause'].map((n) => <Slot key={n} n={n} />)}
      <span className="ml-1 mr-0.5 flex"><Grip /></span>
      {['gGrid', 'gList', 'gPage', 'gPrint', 'gDots'].map((n) => <Slot key={n} n={n} />)}
      <span className="mx-px"><Sep /></span>
      {['redo', 'stop', 'hold'].map((n) => <Slot key={n} n={n} />)}
      <Sep />
      <span className="ml-[5px] flex h-4 w-[179px] items-center justify-center bg-[#7cfc00] font-bold text-[#123a00]">就绪/重新处理数据模式</span>
      <span className="mx-[3px]"><Sep /></span>
      <Slot n="help" />
    </div>
    <div className="w-[993px]"><SeqTable /></div>
    <div className="mr-px h-[5px] border-b border-t-2 border-b-[#e9e7d6] border-t-[#eeecdc]" />
    <div className={'flex h-6 w-[230px] items-center pb-0.5 pl-0.5 text-[11.3px] ' + BAR}>
      {[['integral', '积分'], ['scale', '校正'], ['signal', '信号'], ['purity', '纯化'], ['spectrum', '光谱']].map(([n, t], i) => (
        <span key={t} className={'mr-px flex h-[22px] w-[44.5px] items-center gap-px whitespace-nowrap pl-px ' + (i ? '' : 'border border-[#4a4a90] bg-gradient-to-b from-[#fcb578] to-[#f79a5c]')}>
          <Icon n={n} s={16} />{t}
        </span>
      ))}
    </div>
    <div className={'mt-px flex h-[25px] w-[660px] items-center pb-0.5 text-[9.2px] ' + BAR}>
      <Grip />
      <span className="ml-0.5 flex">{['intChart', 'chartTool', 'chartPen'].map((n) => <Slot key={n} n={n} />)}</span>
      <span className="ml-0.5"><Sep /></span>
      <span className="ml-1 w-8 whitespace-nowrap">报告:</span>
      <span className="mr-0.5 flex h-4 w-[70px] items-center whitespace-nowrap bg-white pl-[3px] text-[9px] tracking-[-0.1px]">性能报告+噪...</span>
      {['copy', 'preview', 'print', 'gCopy'].map((n) => <Slot key={n} n={n} />)}
      <span className="ml-1 mr-1 flex"><Grip /></span>
      <span className="flex h-4 w-[142px] items-center justify-between whitespace-nowrap bg-white pl-px tracking-[-0.05px]">DAD1 A, Sig=2...150401010.D)<Drop /></span>
      <span className="ml-0.5 flex"><Slot n="palette" hot /></span>
      <span className="ml-0.5 mr-px"><Sep /></span>
      <Slot n="zoomIn" hot /><Slot n="zoomOut" />
      <span className="ml-0.5 mr-px"><Sep /></span>
      {['cursor', 'peakUp', 'peakDown', 'peakTan', 'peakSplit', 'peakDel', 'gUndo', 'gDel', 'gInfo'].map((n) => <Slot key={n} n={n} s={15} />)}
    </div>
    <div className="flex">
      <ReportWindow />
      <SideTools />
    </div>
    <div className="mt-px h-1 bg-[#eceadc]" />
  </div>
);

const Program = () => (
  <div className="flex h-[715px] w-[1139px] flex-col bg-[#d0d6e1] font-['Noto_Sans','Noto_Sans_CJK_SC',sans-serif] text-black">
    <TopBars />
    <div className="flex h-[607px]">
      <Sidebar />
      <MainArea />
    </div>
    <div className="mx-0.5 mt-px h-[19px] border-b border-[#8d96a8] bg-white" />
    <div className="flex h-[22px] items-center justify-end pr-1 text-[9px] text-[#7f848d]">
      <Icon n="instr" s={14} /><span className="ml-0.5 mr-1.5">仪器 1</span><Icon n="ready" s={13} /><span className="ml-0.5">就绪</span>
    </div>
    <div className="flex h-[3px]"><i className="w-16 bg-[#3f9a3f]" /><i className="flex-1 bg-[#2a6fe0]" /></div>
  </div>
);

/* ---------- slide annotations ---------- */

const BOX = 'absolute flex rounded-[3px] border-[6px] border-[#842a4a] bg-[#b83c66] text-white';
const HAND = "font-['Noto_Sans','Noto_Sans_CJK_SC',sans-serif] whitespace-pre";
const Han = ({ children }) => <span className="inline-block -skew-x-6 text-[31px] font-medium tracking-[4.5px]">{children}</span>;
const Num = ({ children, wide }) => <span className={'font-medium ' + (wide ? 'tracking-[-0.6px]' : 'tracking-[-2px]')}>{children}</span>;
const Le = () => <span className="inline-block w-[23px] font-['DejaVu_Sans_Condensed','DejaVu_Sans',sans-serif] text-[28px]">≤</span>;

const Annotations = () => (
  <>
    <svg className="absolute left-0 top-0" width="1284" height="1080" fill="none" stroke="#b5406b" strokeWidth="4">
      <path d="M323 392v-73M315.500 330l7.500-13 7.500 13M687 869h9.500v34h-10M697 880.500h121M805 873l14 7.500-14 7.500" strokeLinecap="round" />
    </svg>
    <div className={BOX + ' left-[218px] top-[401px] h-[63px] w-[391px] items-center justify-center'}>
      <span className={HAND + ' ml-1 -skew-x-6 text-[31px] font-medium tracking-[4.5px]'}>报告→打印报告</span>
    </div>
    <svg className="absolute left-[455px] top-[465px]" width="30" height="82" fill="none" stroke="#b5406b" strokeWidth="4">
      <path d="M15.500 8v64M8 61l7.500 12 7.500-12" strokeLinecap="round" />
    </svg>
    <div className={BOX + ' left-[774px] top-[605px] h-[221px] w-[368px] flex-col justify-center text-[36px] leading-[43.4px] ' + HAND}>
      <div className="h-[43.4px] pl-[14px]"><Han>主峰要求:</Han></div>
      <div className="h-[43.4px] pl-[86px]"><Han>分离度</Han><span className="text-[28px]">{' > '}</span><span className="ml-px"><Num wide>1.5</Num></span></div>
      <div className="h-[43.4px] pl-[11px]"><Num wide>0.95</Num><Le /><Han>对称因子</Han><Le /><span className="ml-1.5 text-[35px]"><Num wide>1.05</Num></span></div>
      <div className="h-[43.4px] pl-[52px]"><Han>塔板数</Han><Num>8000</Num><span className="ml-0.5"><Han>以上</Han></span></div>
    </div>
    <div className={'absolute left-[840px] top-[853px] text-[31px] leading-[44px] tracking-[4px] font-bold text-[#ff0d0d] -skew-x-6 ' + HAND}>主峰数据</div>
  </>
);

const Band = () => (
  <div className="relative h-full w-[156px] overflow-hidden border-l border-[#b9a0b9] bg-[linear-gradient(to_bottom,#3d0033_0px,#4a0a40_20px,#4e103e_110px,#5a1a50_240px,#722a66_400px,#85307c_600px,#90318a_800px,#963096_1080px)]">
    <svg width="156" height="1080" className="block">
      <defs>
        <pattern id="diamonds" width="48" height="48" patternUnits="userSpaceOnUse" x="11" y="22">
          <path d="M24 0l24 24-24 24-24-24z" fill="#fff" fillOpacity=".03" />
        </pattern>
        <linearGradient id="fade" x1="0" x2="0" y1="0" y2="1">
          <stop offset="0" stopColor="#fff" stopOpacity=".15" />
          <stop offset=".3" stopColor="#fff" stopOpacity=".8" />
          <stop offset="1" stopColor="#fff" />
        </linearGradient>
        <mask id="fadeMask"><rect width="156" height="1080" fill="url(#fade)" /></mask>
        <linearGradient id="edge" x1="0" x2="1">
          <stop offset="0" stopColor="#1c0018" stopOpacity=".7" />
          <stop offset="1" stopColor="#1c0018" stopOpacity="0" />
        </linearGradient>
      </defs>
      <rect width="156" height="1080" fill="url(#diamonds)" mask="url(#fadeMask)" />
      <rect width="12" height="1080" fill="url(#edge)" />
    </svg>
  </div>
);

export default function App() {
  return (
    <div className="relative flex h-[1080px] w-[1440px] overflow-hidden bg-white">
      <main className="flex w-[1284px] flex-col pl-[74px] pt-[134px]">
        <h1 className="h-[145px] whitespace-nowrap pl-1.5 font-['Noto_Sans_CJK_SC',sans-serif] text-[77px] leading-[94px] tracking-[4px]">
          <span className="bg-[linear-gradient(to_bottom,#fdeadd_18%,#f9cf98_36%,#f5ab3c_50%,#f9cd94_64%,#fdeae0_82%)] bg-clip-text font-bold text-transparent [-webkit-text-stroke:1.2px_#6a2c62]">数据分析</span>
        </h1>
        <Program />
      </main>
      <Band />
      <Annotations />
    </div>
  );
}
